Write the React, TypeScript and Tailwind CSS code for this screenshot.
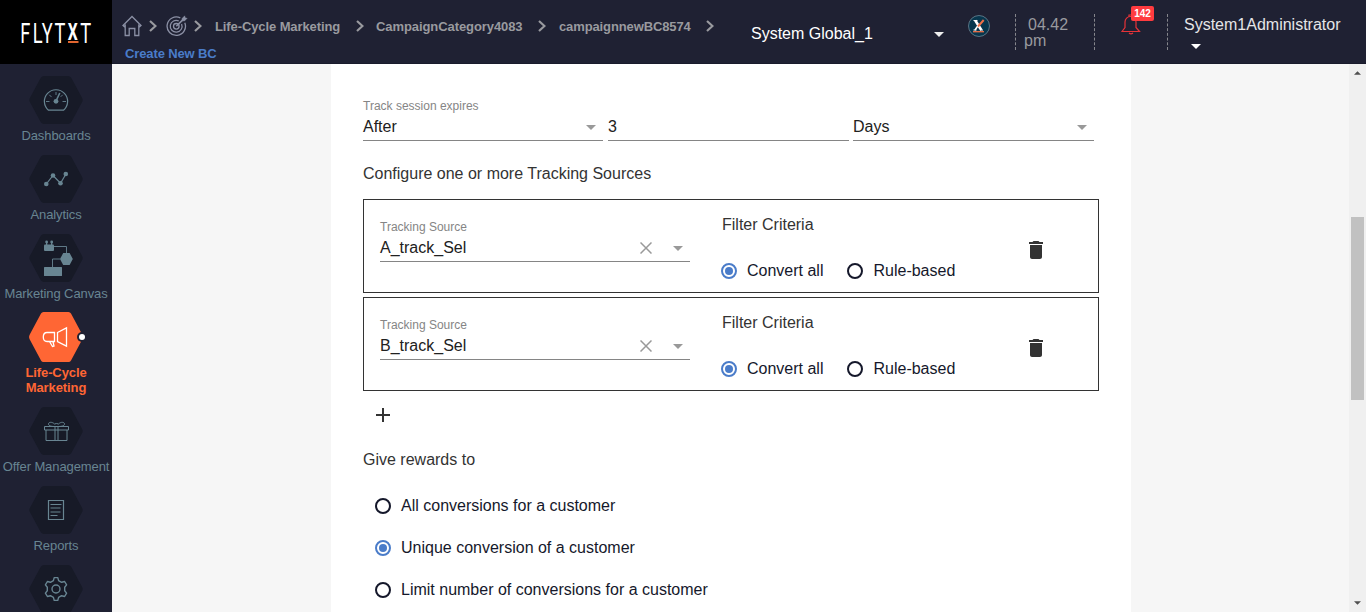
import React from "react";

const HEX = "M15 0h24q2 0 3.200 1.800l10.800 19.900q1.300 2.300 0 4.600L42.200 46.200q-1.200 1.800-3.200 1.800H15q-2 0-3.200-1.800L1 26.300q-1.300-2.300 0-4.600L11.800 1.800Q13 0 15 0z";

function Hexagon({ children }: { children: React.ReactNode }) {
  return (
    <svg width="54" height="48" viewBox="0 0 54 48" fill="none" stroke="#688592" strokeWidth="1.2" className="block shrink-0">
      <path d={HEX} fill="#171a27" stroke="none" />
      {children}
    </svg>
  );
}

function NavItem({ label, children }: { label?: string; children: React.ReactNode }) {
  return (
    <a className="flex h-[79px] shrink-0 flex-col items-center whitespace-nowrap text-[13px] leading-[15px] tracking-[-0.1px] text-[#688592]">
      <Hexagon>{children}</Hexagon>
      {label && <span className="mt-1">{label}</span>}
    </a>
  );
}

function Sidebar() {
  return (
    <aside className="flex w-28 shrink-0 flex-col overflow-hidden bg-[#1f2133]">
      <div className="h-16 shrink-0 bg-black">
        <svg width="112" height="64" fill="#fff">
          <text transform="translate(0 42.700) scale(0.64 1)" fontFamily="Roboto, sans-serif" fontSize="28.5">
            <tspan x="31.800 51 65.300 85.200">FLYT</tspan>
            <tspan x="105.800" y="-3.200" fontSize="24.500" fontWeight="700">X</tspan>
            <tspan x="125.500" y="0">T</tspan>
          </text>
          <rect x="68" y="41" width="10.500" height="2" fill="#e2662f" />
        </svg>
      </div>
      <nav className="flex flex-col pt-3">
        <NavItem label="Dashboards">
          <path d="M19.500 34.200a11.600 11.600 0 1 1 15 0z" />
          <path d="M17 25.500h3.500M33.500 25.500h3.500M20.300 18.800l2.300 2.300M27 16v3M33.700 18.800l-2 2" strokeWidth="0.9" />
          <path d="M27 25l3.800-8" strokeWidth="1.6" />
          <circle cx="27" cy="25.300" r="2.400" fill="#688592" stroke="none" />
        </NavItem>
        <NavItem label="Analytics">
          <path d="M17.300 29l6.700-8.500 7.500 7.700 5.300-9" />
          <g fill="#688592" stroke="none">
            <circle cx="17.300" cy="29" r="2.300" />
            <circle cx="24" cy="20.500" r="2.300" />
            <circle cx="31.500" cy="28.200" r="2.300" />
            <circle cx="36.800" cy="19" r="2.300" />
          </g>
        </NavItem>
        <NavItem label="Marketing Canvas">
          <path d="M25 12.500h12.500v7M31 25h-7.500v8.500" strokeWidth="0.9" />
          <g fill="#688592" stroke="none">
            <rect x="15" y="10.500" width="10" height="6.500" rx="1" />
            <rect x="17" y="8" width="1.300" height="4" />
            <rect x="22" y="8" width="1.300" height="4" />
            <circle cx="17.600" cy="8" r="1.400" />
            <circle cx="22.700" cy="8" r="1.400" />
            <path d="M34.200 19h6.400l3.200 6-3.200 6h-6.400L31 25z" />
            <rect x="15" y="33" width="18" height="9" rx="0.500" />
          </g>
        </NavItem>
        <a className="-mt-px flex h-[95px] shrink-0 flex-col items-center text-center text-[13px] font-bold leading-[15px] tracking-[-0.1px] text-[#ff6634]">
          <svg width="60" height="50" viewBox="0 0 60 50" fill="none" className="block shrink-0">
            <path d="M17.500 0h25q1.700 0 2.500 1.500L56.500 23q1 2 0 4L45 48.500q-.8 1.500-2.500 1.500h-25q-1.700 0-2.500-1.500L3.500 27q-1-2 0-4L15 1.500Q15.800 0 17.500 0z" fill="#ff6634" />
            <circle cx="56" cy="25" r="5" fill="#1f2133" />
            <circle cx="56" cy="25" r="3" fill="#fff" />
            <path d="M28.500 20.500H21q-3.700 0-3.700 4.500t3.700 4.500h7.500zM31.500 20.500l9-4.700v18.400l-9-4.700zM23.500 29.500l3 5 1.500-.5-1-4.500" stroke="#fff" strokeWidth="1.300" />
          </svg>
          <span className="mt-[3px] w-20">Life-Cycle Marketing</span>
        </a>
        <NavItem label="Offer Management">
          <path d="M15.500 19.500h24v3.500h-24zM17 23v10.500h21V23M26 19.500v14M29 19.500v14M26 19.500c-3 0-6.500-.5-6.500-2.500s3.500-2.500 6 0q2-1 4 0c2.500-2.500 6-2 6 0s-3.500 2.500-6.500 2.500z" strokeWidth="1" />
        </NavItem>
        <NavItem label="Reports">
          <path d="M19.500 14.500h15v19h-15z" />
          <path d="M21.500 18.500h11M21.500 22h10M21.500 26h10M21.500 29.500h7" strokeWidth="1.100" />
        </NavItem>
        <NavItem>
          <path d="M25.200 12.600h3.600l.8 3 3 1.700 3-.8 2 3.400-1.900 2.400v3.400l1.900 2.400-2 3.400-3-.8-3 1.700-.8 3h-3.600l-.8-3-3-1.700-3 .8-2-3.400 1.900-2.400v-3.400l-1.900-2.400 2-3.400 3 .8 3-1.700z" strokeWidth="1.400" strokeLinejoin="round" />
          <circle cx="27" cy="24" r="4" strokeWidth="1.400" />
        </NavItem>
      </nav>
    </aside>
  );
}

function Chevron() {
  return (
    <svg width="8" height="12" viewBox="0 0 8 12" fill="none" stroke="#999a9f" strokeWidth="2.2" className="shrink-0">
      <path d="M1 1l5.500 5L1 11" />
    </svg>
  );
}

function Caret({ className }: { className: string }) {
  return (
    <svg width="10" height="5" viewBox="0 0 10 5" className={`shrink-0 ${className}`}>
      <path d="M0 0h10L5 5z" fill="currentColor" />
    </svg>
  );
}

function Header() {
  return (
    <header className="flex h-16 shrink-0 items-start border-b border-[#191b2c] bg-[#1f2133]">
      <div className="w-[639px] shrink-0 pl-[10px] pt-[15px] text-[13px] font-bold leading-[15px] text-[#999a9f]">
        <div className="flex h-[22px] items-center whitespace-nowrap">
          <svg width="20" height="22" viewBox="0 0 20 22" fill="none" stroke="#8b90a5" strokeWidth="1.300" className="shrink-0">
            <path d="M1 10.500L10 1.500l9 9-1.200 1-1-1V20.500h-4v-7h-5.600v7h-4v-10l-1 1z" />
          </svg>
          <div className="ml-[7px] flex"><Chevron /></div>
          <svg width="22" height="22" viewBox="0 0 22 22" fill="none" stroke="#8b90a5" strokeWidth="1.300" className="ml-[9px] shrink-0">
            <path d="M14.300 2.900A9.200 9.200 0 1 0 18.800 7.700" />
            <path d="M12.800 6A5.900 5.900 0 1 0 15.600 9" />
            <circle cx="10.300" cy="11.300" r="2.800" />
            <path d="M10.300 11.300L17 4.600" strokeWidth="1.600" />
            <path d="M16 5.800V3.500L18.700.8l.5 2 2 .5-2.700 2.700z" fill="#8b90a5" strokeWidth="0.400" />
          </svg>
          <div className="ml-[6px] flex"><Chevron /></div>
          <span className="ml-[13px] w-[125px] tracking-[-0.1px]">Life-Cycle Marketing</span>
          <div className="ml-[16px] flex"><Chevron /></div>
          <span className="ml-[12px] w-[146px] tracking-[-0.08px]">CampaignCategory4083</span>
          <div className="ml-[16px] flex"><Chevron /></div>
          <span className="ml-[13px] w-[132px] tracking-[-0.12px]">campaignnewBC8574</span>
          <div className="ml-[15px] flex"><Chevron /></div>
        </div>
        <div className="ml-[3px] mt-[9px] tracking-[-0.12px] text-[#4a7cc9]">Create New BC</div>
      </div>
      <div className="mt-[25px] flex w-[193px] shrink-0 items-center justify-between text-base leading-[18px] text-white">
        <span>System Global_1</span>
        <Caret className="text-[#eeeeee]" />
      </div>
      <svg width="22" height="22" viewBox="0 0 22 22" className="ml-[24px] mt-[15px] shrink-0">
        <circle cx="11" cy="11" r="10.500" fill="#07364d" stroke="#6c8796" strokeWidth="0.800" />
        <path d="M7.300 5.500l6 9.500" stroke="#fff" strokeWidth="2.600" />
        <path d="M10.500 10L7 15" stroke="#fff" strokeWidth="1.600" />
        <path d="M15.700 5l-5.700 6.500" stroke="#ee7047" strokeWidth="2" />
        <path d="M5 16.700h11" stroke="#ee7047" strokeWidth="1.300" />
        <path d="M5.500 5.500h4M5.500 15h3M12 15h3" stroke="#fff" strokeWidth="1" />
      </svg>
      <div className="ml-[25px] mt-3.5 h-9 w-[79px] shrink-0 border-l border-dashed border-[#85868c] pl-2 text-base leading-4 text-[#999a9f]">
        <div className="pl-1 pt-[3px]">04.42</div>
        <div>pm</div>
      </div>
      <div className="relative mt-3.5 h-9 w-[73px] shrink-0 border-l border-dashed border-[#85868c]">
        <svg width="20" height="22" viewBox="0 0 20 22" fill="none" stroke="#e73338" strokeWidth="1.200" className="ml-[26px]">
          <path d="M1 17.500l3-4V8a5.500 5.500 0 0 1 11 0v5.500l3.500 4zM8 2.500V1h3v1.500M8 19q2 1.700 4 0" />
        </svg>
        <span className="absolute -top-2 left-9 flex h-[15px] w-[23px] items-center justify-center rounded-[2px] bg-[#ff3b3f] text-[10px] font-bold text-white">142</span>
      </div>
      <div className="mt-3.5 h-9 grow border-l border-dashed border-[#85868c] pl-4 text-base leading-[18px] text-[#e5e5e7]">
        <div className="pt-0.5">System1Administrator</div>
        <Caret className="ml-[7px] mt-[10px] text-white" />
      </div>
    </header>
  );
}

function Radio({ checked, label }: { checked?: boolean; label: string }) {
  return (
    <label className="flex items-center gap-[10px] whitespace-nowrap text-base leading-5 text-[#15182b]">
      <span className={`flex size-4 items-center justify-center rounded-full border-2 ${checked ? "border-[#4a7cc9]" : "border-[#15182b]"}`}>
        {checked && <span className="size-2 rounded-full bg-[#4a7cc9]" />}
      </span>
      <span>{label}</span>
    </label>
  );
}

function SourceCard({ name }: { name: string }) {
  return (
    <div className="flex h-[94px] items-start border border-[#333333] pl-4">
      <div className="mt-5 w-[310px] border-b border-[#858585]">
        <div className="text-xs leading-[14px] text-[#858585]">Tracking Source</div>
        <div className="flex h-[27px] items-center text-base text-[#212121]">
          <span className="grow">{name}</span>
          <svg width="12" height="12" viewBox="0 0 12 12" stroke="#999" strokeWidth="1.500" className="mt-px">
            <path d="M.5.5l11 11M11.500.5l-11 11" />
          </svg>
          <Caret className="ml-[21px] mr-[7px] mt-px text-[#999]" />
        </div>
      </div>
      <div className="ml-[31px] w-[298px] pt-[15px]">
        <div className="pl-px text-base leading-5 text-[#333]">Filter Criteria</div>
        <div className="mt-[26px] flex gap-6">
          <Radio checked label="Convert all" />
          <Radio label="Rule-based" />
        </div>
      </div>
      <svg width="24" height="24" viewBox="0 0 24 24" fill="#333" className="ml-[5px] mt-[38px]">
        <path d="M6 19c0 1.100.9 2 2 2h8c1.100 0 2-.9 2-2V7H6v12zM19 4h-3.500l-1-1h-5l-1 1H5v2h14V4z" />
      </svg>
    </div>
  );
}

function Scrollbar() {
  return (
    <div className="flex w-[17px] shrink-0 flex-col items-center bg-[#f0f0f0] text-[#505050]">
      <Caret className="mt-[7px] h-1 w-[7px] rotate-180" />
      <div className="mt-[142px] h-[183px] w-[13px] bg-[#c1c1c1]" />
      <Caret className="mb-[7px] mt-auto h-1 w-[7px]" />
    </div>
  );
}

export default function App() {
  return (
    <div className="flex h-[612px] w-[1366px] overflow-hidden bg-[#f6f6f6] font-['Liberation_Sans',Arial,sans-serif]">
      <Sidebar />
      <div className="flex min-w-0 grow flex-col">
        <Header />
        <div className="flex min-h-0 grow">
          <div className="flex min-w-0 grow pl-[219px]">
            <main className="w-[800px] overflow-hidden bg-white px-8 pt-[35px]">
              <div className="h-[14px] text-xs leading-[14px] text-[#858585]">Track session expires</div>
              <div className="flex h-7 gap-[5px] text-base text-[#212121]">
                <div className="flex w-60 items-center justify-between border-b border-[#858585] pr-[7px]">
                  <span>After</span>
                  <Caret className="mt-px text-[#999]" />
                </div>
                <div className="flex w-[241px] items-center border-b border-[#858585]">3</div>
                <div className="-ml-px flex w-[241px] items-center justify-between border-b border-[#858585] pr-[7px]">
                  <span>Days</span>
                  <Caret className="mt-px text-[#999]" />
                </div>
              </div>
              <h2 className="mt-[23px] text-base leading-5 text-[#333]">Configure one or more Tracking Sources</h2>
              <div className="mt-[15px] flex flex-col gap-1">
                <SourceCard name="A_track_Sel" />
                <SourceCard name="B_track_Sel" />
              </div>
              <svg width="24" height="24" viewBox="0 0 24 24" fill="#333" className="ml-2 mt-3 block">
                <path d="M19 13h-6v6h-2v-6H5v-2h6V5h2v6h6v2z" />
              </svg>
              <h2 className="mt-[23px] text-base leading-5 text-[#333]">Give rewards to</h2>
              <div className="mt-[26px] flex flex-col gap-[22px] pl-3">
                <Radio label="All conversions for a customer" />
                <Radio checked label="Unique conversion of a customer" />
                <Radio label="Limit number of conversions for a customer" />
              </div>
            </main>
          </div>
          <Scrollbar />
        </div>
      </div>
    </div>
  );
}
